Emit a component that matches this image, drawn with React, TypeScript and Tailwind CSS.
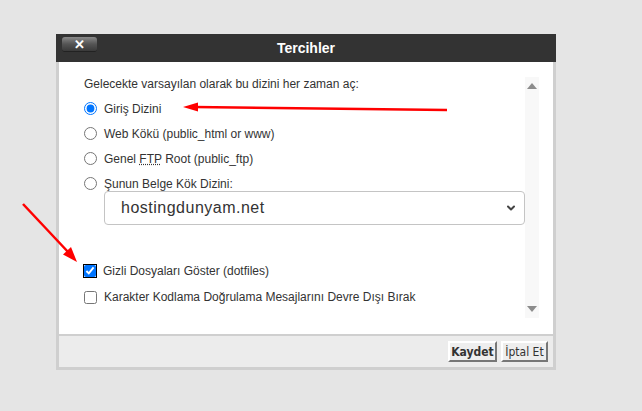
import { ChevronDown } from 'lucide-react';

const radios = [
  { id: 'home', label: 'Giriş Dizini', checked: true },
  { id: 'webroot', label: 'Web Kökü (public_html or www)' },
  { id: 'ftp', label: 'ftp' },
  { id: 'docroot', label: 'Şunun Belge Kök Dizini:' },
];

function RedArrows() {
  return (
    <svg className="absolute inset-0 pointer-events-none" width="642" height="411" viewBox="0 0 642 411">
      <line x1="447" y1="110" x2="194" y2="107" stroke="#ff0000" strokeWidth="2.5" />
      <polygon points="183,107 198,102.5 198,111.5" fill="#ff0000" />
      <line x1="23" y1="204" x2="69" y2="253" stroke="#ff0000" strokeWidth="2.5" />
      <polygon points="77,262 63,254.5 71,247" fill="#ff0000" />
    </svg>
  );
}

export default function App() {
  return (
    <div className="relative w-[642px] h-[411px] bg-[#e5e5e5] pt-[34px] pl-[56px] font-['Liberation_Sans',Arial,sans-serif] text-[#333]">
      <div className="w-[500px]">
        {/* Title bar */}
        <div className="relative h-[28px] bg-[#333] flex items-center justify-center">
          <button className="absolute left-[6px] top-[3px] w-[35px] h-[15px] rounded-[3px] bg-gradient-to-b from-[#8a8a8a] via-[#555] to-[#3a3a3a] border-b border-[#222] flex items-center justify-center text-white font-bold text-[13px] leading-none">
            ✕
          </button>
          <span className="text-white font-bold text-[14px]">Tercihler</span>
        </div>

        {/* Body */}
        <div className="h-[272px] bg-white border-x-[3px] border-[#cfcfcf] flex pt-[15px] pb-[16px] pr-[14px]">
          <div className="flex-1 pl-[25px] text-[12px]">
            <p className="h-[14px] leading-[14px]">Gelecekte varsayılan olarak bu dizini her zaman aç:</p>
            <div className="mt-[5px] flex flex-col">
              {radios.map((r) => (
                <label key={r.id} className="h-[25px] flex items-center gap-[7px]">
                  <input type="radio" name="dir" defaultChecked={r.checked} className="w-[13px] h-[13px] m-0 accent-[#0075ff]" />
                  {r.id === 'ftp' ? (
                    <span>
                      Genel <abbr className="underline decoration-dotted">FTP</abbr> Root (public_ftp)
                    </span>
                  ) : (
                    <span>{r.label}</span>
                  )}
                </label>
              ))}
            </div>
            <div className="ml-[20px] mt-[-5px] w-[421px] h-[34px] border border-[#c4c4c4] rounded-[4px] flex items-center justify-between pl-[16px] pr-[7px]">
              <span className="text-[16px] tracking-[0.5px] text-[#333]">hostingdunyam.net</span>
              <ChevronDown size={12} strokeWidth={4} className="text-[#444]" />
            </div>
            <div className="mt-[33px] flex flex-col">
              <label className="h-[26px] flex items-center gap-[7px]">
                <input type="checkbox" defaultChecked className="w-[12px] h-[12px] m-0 accent-[#0075ff] outline outline-[1.5px] outline-[#000] rounded-[2px]" />
                <span>Gizli Dosyaları Göster (dotfiles)</span>
              </label>
              <label className="h-[26px] flex items-center gap-[7px]">
                <input type="checkbox" className="w-[13px] h-[13px] m-0" />
                <span>Karakter Kodlama Doğrulama Mesajlarını Devre Dışı Bırak</span>
              </label>
            </div>
          </div>
          {/* Scroll track */}
          <div className="w-[15px] bg-[#f8f8f8] flex flex-col items-center justify-between py-[6px]">
            <div className="w-0 h-0 border-x-[5px] border-x-transparent border-b-[6px] border-b-[#8c8c8c]" />
            <div className="w-0 h-0 border-x-[5px] border-x-transparent border-t-[6px] border-t-[#8c8c8c]" />
          </div>
        </div>

        {/* Footer */}
        <div className="h-[36px] bg-[#ececec] border-x-[3px] border-b-[3px] border-t-[2px] border-[#cfcfcf] flex items-center justify-end gap-[4px] pr-[5px] font-['DejaVu_Sans_Condensed','DejaVu_Sans',Verdana,sans-serif] text-[12px]">
          <button className="w-[49px] h-[21px] bg-[#eee] border-2 border-t-white border-l-white border-r-[#777] border-b-[#777] font-bold text-[#333] whitespace-nowrap flex items-center justify-center">
            Kaydet
          </button>
          <button className="w-[47px] h-[21px] bg-[#eee] border-2 border-t-white border-l-white border-r-[#777] border-b-[#777] text-[#333] whitespace-nowrap flex items-center justify-center">
            İptal Et
          </button>
        </div>
      </div>
      <RedArrows />
    </div>
  );
}
